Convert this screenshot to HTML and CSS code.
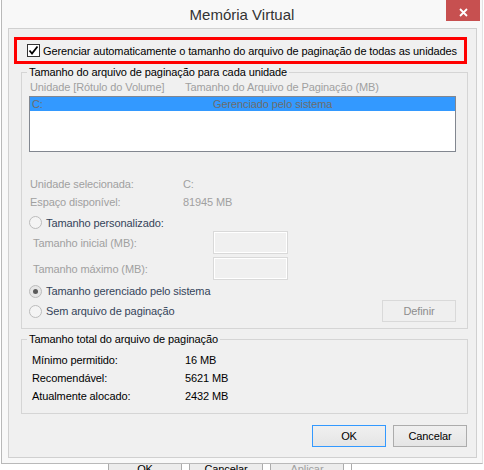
FILE: index.html
```html
<!DOCTYPE html>
<html lang="pt-BR">
  <head>
    <meta charset="UTF-8" />
    <meta name="viewport" content="width=device-width, initial-scale=1.0" />
    <title>Memória Virtual</title>
    <link rel="stylesheet" href="styles.css">
  </head>
  <body>
    <div class="screen">
      <div class="window">
        <div class="titlebar">
          <span class="title">Memória Virtual</span>
          <button class="close">
            <svg width="9" height="9" viewBox="0 0 9 9">
              <path d="M1 1 L8 8 M8 1 L1 8" stroke="#fff" stroke-width="1.8" fill="none" />
            </svg>
          </button>
        </div>

        <div class="client">
          <div class="auto-row">
            <span class="checkbox">
              <svg width="11" height="11" viewBox="0 0 11 11">
                <path d="M1.5 5.5 L4 8.5 L9.5 1.5" stroke="#000" stroke-width="1.8" fill="none" />
              </svg>
            </span>
            <span>Gerenciar automaticamente o tamanho do arquivo de paginação de todas as unidades</span>
          </div>

          <fieldset class="group drives">
            <legend>Tamanho do arquivo de paginação para cada unidade</legend>
            <div class="list-head">
              <span class="head-drive">Unidade [Rótulo do Volume]</span>
              <span>Tamanho do Arquivo de Paginação (MB)</span>
            </div>
            <div class="list">
              <div class="list-item selected">
                <span class="item-drive">C:</span>
                <span>Gerenciado pelo sistema</span>
              </div>
            </div>

            <div class="info-row first">
              <span class="info-label">Unidade selecionada:</span>
              <span>C:</span>
            </div>
            <div class="info-row">
              <span class="info-label">Espaço disponível:</span>
              <span>81945 MB</span>
            </div>

            <div class="radio-row custom"><span class="radio"></span>Tamanho personalizado:</div>
            <div class="size-row">
              <span class="size-label">Tamanho inicial (MB):</span>
              <span class="textbox"></span>
            </div>
            <div class="size-row second">
              <span class="size-label">Tamanho máximo (MB):</span>
              <span class="textbox"></span>
            </div>
            <div class="radio-row managed"><span class="radio on"></span>Tamanho gerenciado pelo sistema</div>
            <div class="radio-row none">
              <span class="radio"></span>Sem arquivo de paginação
              <button class="btn btn-off" disabled>Definir</button>
            </div>
          </fieldset>

          <fieldset class="group totals">
            <legend>Tamanho total do arquivo de paginação</legend>
            <div class="total-row">
              <span class="total-label">Mínimo permitido:</span>
              <span>16 MB</span>
            </div>
            <div class="total-row">
              <span class="total-label">Recomendável:</span>
              <span>5621 MB</span>
            </div>
            <div class="total-row">
              <span class="total-label">Atualmente alocado:</span>
              <span>2432 MB</span>
            </div>
          </fieldset>

          <div class="actions">
            <button class="btn btn-default">OK</button>
            <button class="btn">Cancelar</button>
          </div>
        </div>
      </div>

      <!-- buttons of the properties dialog underneath -->
      <div class="behind">
        <span class="ghost-btn">OK</span>
        <span class="ghost-btn">Cancelar</span>
        <span class="ghost-btn off">Aplicar</span>
      </div>
    </div>
  </body>
</html>
```

FILE: styles.css
```css
body {
  margin: 0;
  background-color: #fff;
  font-family: "Liberation Sans", Arial, sans-serif;
  font-size: 11px;
  letter-spacing: -0.1px;
  color: #000;
}

.screen {
  width: 484px;
  height: 470px;
  overflow: hidden;
}

.window {
  margin-left: 1px;
  width: 482px;
  height: 464px;
  box-sizing: border-box;
  border-left: 1px solid #b9b9b9;
  border-right: 1px solid #e2e2e2;
  border-bottom: 1px solid #b9b9b9;
  background-color: #f8f8f8;
}

.titlebar {
  height: 28px;
  display: grid;
  grid-template-columns: 1fr auto 1fr;
  align-items: start;
}

.title {
  grid-column: 2;
  font-size: 15px;
  line-height: 27px;
  padding-top: 1px;
  letter-spacing: 0;
  color: #333;
}

.close {
  grid-column: 3;
  justify-self: end;
  margin-right: 2px;
  width: 34px;
  height: 21px;
  padding: 3px 0 0;
  border: none;
  background-color: #c75050;
  display: flex;
  align-items: center;
  justify-content: center;
}

.client {
  margin: 0 5px 0 6px;
  height: 430px;
  box-sizing: border-box;
  border: 1px solid #d0d0d0;
  background-color: #f0f0f0;
}

.auto-row {
  margin: 8px 0 0 5px;
  width: 453px;
  height: 27px;
  box-sizing: border-box;
  border: 3px solid #ff0000;
  padding-left: 10px;
  display: flex;
  align-items: center;
  gap: 3px;
}

.checkbox {
  width: 13px;
  height: 13px;
  box-sizing: border-box;
  border: 1px solid #333;
  background-color: #fff;
  display: flex;
  align-items: center;
  justify-content: center;
}

.group {
  margin: 2px 0 0 12px;
  width: 447px;
  min-width: 0;
  box-sizing: border-box;
  border: 1px solid #d5d5d5;
  padding: 0 11px 6px 7px;
}

.group legend {
  margin-left: -2px;
  padding: 0 2px;
  line-height: 13px;
}

.totals {
  margin-top: 4px;
  padding-top: 5px;
  padding-bottom: 8px;
}

/* drive list */
.list-head {
  height: 16px;
  line-height: 16px;
  padding-left: 1px;
  display: flex;
  color: #a0a0a0;
}

.head-drive {
  width: 155px;
}

.list {
  margin-top: 1px;
  height: 56px;
  box-sizing: border-box;
  border: 1px solid #828790;
  background-color: #fff;
}

.list-item {
  height: 14px;
  line-height: 14px;
  padding-left: 2px;
  display: flex;
  color: #6d6d6d;
}

.list-item.selected {
  background-color: #3399ff;
}

.item-drive {
  width: 181px;
}

/* selected drive info */
.info-row {
  height: 18px;
  line-height: 18px;
  padding-left: 1px;
  display: flex;
  color: #a0a0a0;
}

.info-row.first {
  margin-top: 23px;
}

.info-label {
  width: 153px;
}

.radio-row {
  height: 18px;
  display: flex;
  align-items: center;
  color: #34445a;
}

.radio-row.custom {
  margin-top: 3px;
  height: 17px;
}

.radio-row.managed {
  margin-top: 2px;
}

.radio-row.none {
  height: 22px;
}

.radio {
  width: 13px;
  height: 13px;
  box-sizing: border-box;
  border: 1px solid #bcbcbc;
  border-radius: 50%;
  background-color: #f4f4f4;
  margin-right: 4px;
  display: grid;
  place-items: center;
}

.radio.on {
  background-color: #e6e6e6;
}

.radio.on::after {
  content: "";
  width: 5px;
  height: 5px;
  border-radius: 50%;
  background-color: #5a5a5a;
}

.size-row {
  height: 23px;
  padding-left: 4px;
  display: flex;
  align-items: center;
  color: #a0a0a0;
}

.size-row.second {
  margin-top: 3px;
}

.size-label {
  width: 180px;
}

.textbox {
  width: 75px;
  height: 23px;
  box-sizing: border-box;
  border: 1px solid #d9d9d9;
  box-shadow: inset 0 0 0 1px #fff;
  background-color: #f0f0f0;
}

/* buttons */
.btn {
  width: 74px;
  height: 22px;
  box-sizing: border-box;
  padding: 0;
  border: 1px solid #acacac;
  background: linear-gradient(#f0f0f0, #e5e5e5);
  font: inherit;
  letter-spacing: inherit;
  color: #000;
}

.btn-off {
  margin-left: auto;
  border-color: #d9d9d9;
  background: #efefef;
  color: #8d8d8d;
}

.btn-default {
  border-color: #3399ff;
}

/* totals */
.total-row {
  height: 18px;
  line-height: 18px;
  padding-left: 3px;
  display: flex;
}

.total-label {
  width: 153px;
}

.actions {
  margin-top: 11px;
  padding-right: 9px;
  display: flex;
  justify-content: flex-end;
  gap: 7px;
}

/* dialog underneath */
.behind {
  width: 352px;
  height: 6px;
  box-sizing: border-box;
  padding-left: 108px;
  border-right: 1px solid #acacac;
  display: flex;
  gap: 7px;
  overflow: hidden;
}

.ghost-btn {
  width: 74px;
  height: 6px;
  box-sizing: border-box;
  border-left: 1px solid #acacac;
  border-right: 1px solid #acacac;
  background-color: #ececec;
  text-align: center;
  line-height: 10px;
  overflow: hidden;
}

.ghost-btn.off {
  color: #a0a0a0;
}
```
